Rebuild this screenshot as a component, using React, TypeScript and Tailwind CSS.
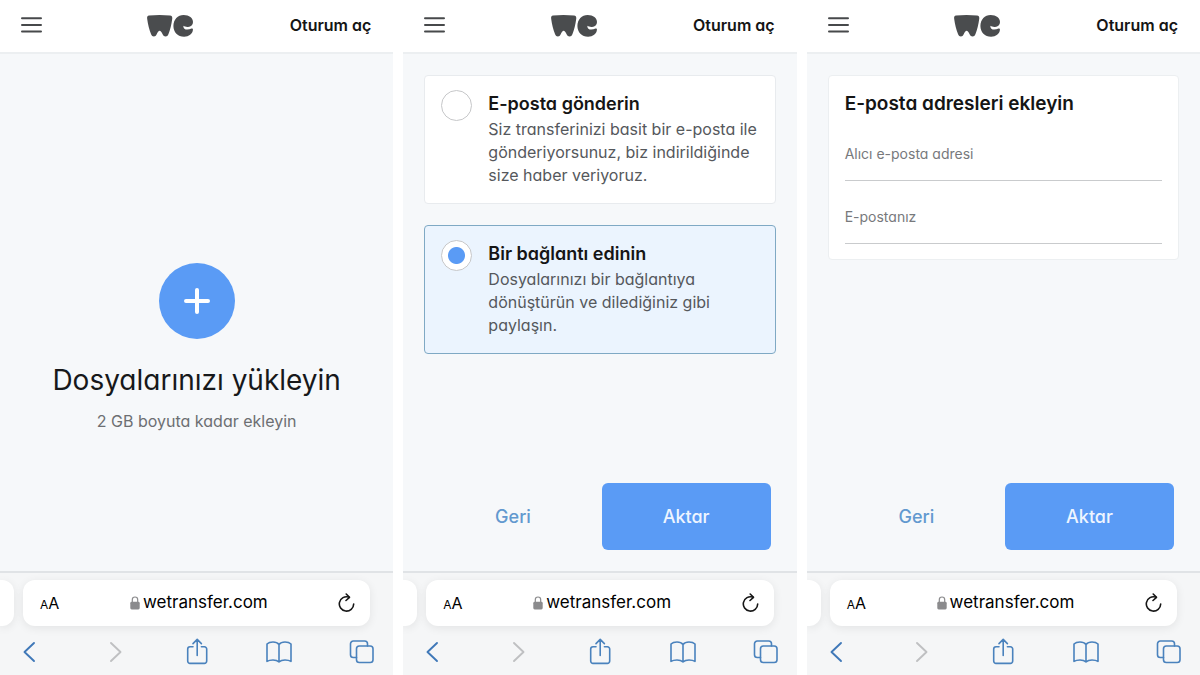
import React from 'react';

const MenuIcon = () => (
  <svg width="21" height="16" viewBox="0 0 21 16" fill="none" stroke="#47494b" strokeWidth="2" strokeLinecap="round" aria-hidden="true">
    <path d="M1 1.2h19M1 7.9h19M1 14.6h19" />
  </svg>
);

const Logo = () => (
  <svg width="46" height="24" viewBox="0 -2 46 24" fill="#4a4c4e" role="img" aria-label="WeTransfer">
    <path d="M2 .4Q12.500-.5 23 .4C25 .6 25.500 1.800 25.200 4C24.500 9.500 23.200 14.800 21.400 19.200C20.700 21 20 21.400 18.600 21.400C17.200 21.400 16.400 20.800 15.600 19.200C14.600 17.100 13.600 15.700 12.600 15.700C11.600 15.700 10.700 17.100 9.700 19.200C8.900 20.800 8.200 21.400 6.900 21.400C5.500 21.400 4.800 20.900 4.100 19.200C2.300 14.800.9 9.500.2 4C-.1 1.800.3.6 2 .4Z" />
    <path d="M36.600 0C42.300 0 46 3 46 6.900C46 9.800 44 11.700 41 11.900C38.900 12 37.500 11.500 36.400 10.800C36.200 13 37.700 14.600 40.200 14.600C41.800 14.600 43.100 14.200 44.500 13.600C45.600 13.100 46.100 13.800 45.900 15C45.400 18.900 42 21.700 37.100 21.700C30.900 21.700 26.400 17.400 26.400 11C26.400 4.600 30.800 0 36.600 0Z" />
  </svg>
);

const LockIcon = () => (
  <svg width="10" height="14" viewBox="0 0 10 14" fill="none" aria-hidden="true">
    <path d="M2.3 6V3.7a2.7 2.7 0 0 1 5.4 0V6" stroke="#8b8b8d" strokeWidth="1.2" />
    <rect x="0.3" y="5.8" width="9.4" height="7.6" rx="1.4" fill="#8b8b8d" />
  </svg>
);

const ReloadIcon = () => (
  <svg width="17" height="20" viewBox="0 0 17 20" fill="none" stroke="#161616" strokeWidth="1.6" strokeLinecap="round" strokeLinejoin="round" aria-hidden="true">
    <path d="M10.8 4.1a7.2 7.2 0 1 0 4.9 7" />
    <path d="M8.2 1l3.3 3.3-3.5 3.2" />
  </svg>
);

const toolbar = [
  { label: 'Önceki sayfa', color: 'text-[#3f78b8]', icon: <path d="M17 5 7.500 14l9.500 9" strokeWidth="1.9" /> },
  { label: 'Sonraki sayfa', color: 'text-[#bfc0c2]', icon: <path d="M11 5l9.500 9-9.500 9" strokeWidth="1.9" /> },
  {
    label: 'Paylaş',
    color: 'text-[#4a82bd]',
    icon: <path d="M10 8.800H7a2.300 2.300 0 0 0-2.300 2.300v12A2.300 2.300 0 0 0 7 25.400h14.400a2.300 2.300 0 0 0 2.300-2.300v-12a2.300 2.300 0 0 0-2.300-2.300H18.400M14.200 17.500V1.800M10 5.600l4.200-4.200 4.200 4.200" />,
  },
  {
    label: 'Yer işaretleri',
    color: 'text-[#4a82bd]',
    icon: <path d="M14 6.500C12.600 4.700 10.600 4 8 4C5.500 4 3.200 4.800 2 6v17.400C3.400 22.500 5.500 22 8 22c2.500 0 4.500.6 6 1.900c1.500-1.300 3.500-1.900 6-1.900c2.500 0 4.600.5 6 1.400V6C24.800 4.800 22.500 4 20 4c-2.600 0-4.600.7-6 2.500ZM14 6.500v17" />,
  },
  {
    label: 'Sekmeler',
    color: 'text-[#4a82bd]',
    icon: (
      <>
        <rect x="8.500" y="8" width="16.500" height="16.500" rx="2.800" />
        <path d="M8.500 19.500H5.300a2.800 2.800 0 0 1-2.800-2.800V5.800A2.800 2.800 0 0 1 5.300 3h11.400a2.800 2.800 0 0 1 2.800 2.800V8" />
      </>
    ),
  },
];

const Header = () => (
  <header className="flex h-[54px] items-center justify-between border-b-2 border-[#eceff1] bg-white pr-[22px] pb-[3px] pl-[21px]">
    <button type="button" aria-label="Menü" className="w-[30px]">
      <MenuIcon />
    </button>
    <Logo />
    <a href="#oturum" className="text-base font-semibold text-[#151515]">
      Oturum aç
    </a>
  </header>
);

const BrowserBar = () => (
  <footer className="overflow-hidden border-t-2 border-[#e0e3e6] bg-[#f5f6f7] [font-feature-settings:normal]">
    <div className="flex gap-[9px] pt-[7px] pr-[23px]">
      <div className="w-[14px] rounded-r-xl bg-white shadow-[0_2px_10px_rgba(0,0,0,0.08)]" />
      <div className="flex h-[46px] flex-1 items-center justify-between rounded-xl bg-white pr-[15px] pl-[17px] text-black shadow-[0_2px_10px_rgba(0,0,0,0.08)]">
        <button type="button" aria-label="Metin boyutu" className="text-base leading-5">
          <span className="text-xs">A</span>A
        </button>
        <button type="button" className="flex items-center gap-[3px] text-[17px]">
          <LockIcon />
          wetransfer.com
        </button>
        <button type="button" aria-label="Yenile">
          <ReloadIcon />
        </button>
      </div>
    </div>
    <nav className="flex h-[49px] items-center justify-between pt-[2px] pr-[17px] pl-[17px]">
      {toolbar.map((item) => (
        <button key={item.label} type="button" aria-label={item.label} className={item.color}>
          <svg width="28" height="28" viewBox="0 0 28 28" fill="none" stroke="currentColor" strokeWidth="1.6" strokeLinecap="round" strokeLinejoin="round">
            {item.icon}
          </svg>
        </button>
      ))}
    </nav>
  </footer>
);

const Phone = ({ children }: { children: React.ReactNode }) => (
  <section className="flex min-w-0 flex-col bg-[#f6f8fa]">
    <Header />
    <div className="flex flex-1 flex-col">{children}</div>
    <BrowserBar />
  </section>
);

const Actions = () => (
  <div className="mt-auto flex h-[67px] pr-[26px] pl-[21px]">
    <button type="button" className="flex-1 text-lg font-medium text-[#6299cf]">
      Geri
    </button>
    <button type="button" className="w-[169px] rounded-md bg-[#5a9bf5] text-lg font-medium text-[#eef5ff]">
      Aktar
    </button>
  </div>
);

const options = [
  {
    id: 'email',
    title: 'E-posta gönderin',
    lines: ['Siz transferinizi basit bir e-posta ile', 'gönderiyorsunuz, biz indirildiğinde', 'size haber veriyoruz.'],
  },
  {
    id: 'link',
    title: 'Bir bağlantı edinin',
    lines: ['Dosyalarınızı bir bağlantıya', 'dönüştürün ve dilediğiniz gibi', 'paylaşın.'],
  },
];

const fields = [
  { id: 'recipient', label: 'Alıcı e-posta adresi' },
  { id: 'sender', label: 'E-postanız' },
];

export default function App() {
  return (
    <main
      lang="tr"
      className="grid min-h-screen grid-cols-3 gap-[10px] bg-white font-['Inter',sans-serif] [font-feature-settings:'cv11']"
    >
      {/* Upload */}
      <Phone>
        <div className="flex flex-1 flex-col items-center justify-center pt-[70px] text-center">
          <button type="button" aria-label="Dosya ekle" className="flex size-[76px] items-center justify-center rounded-full bg-[#5a9bf5]">
            <svg width="26" height="26" viewBox="0 0 26 26" stroke="#fff" strokeWidth="4" strokeLinecap="round" aria-hidden="true">
              <path d="M13 2v22M2 13h22" />
            </svg>
          </button>
          <h1 className="mt-[21px] text-[28px] leading-10 text-[#17181a]">Dosyalarınızı yükleyin</h1>
          <p className="mt-[9px] text-base text-[#6d6f72]">2 GB boyuta kadar ekleyin</p>
        </div>
      </Phone>

      {/* Transfer type */}
      <Phone>
        <div className="flex flex-1 flex-col px-[21px] pt-[21px]">
          <div className="flex flex-col gap-[21px]">
            {options.map((option) => (
              <label
                key={option.id}
                className="flex items-start gap-4 rounded border border-[#e8ebee] bg-white px-4 pt-[14px] pb-4 has-checked:border-[#7fa9c4] has-checked:bg-[#ebf4fe]"
              >
                <input
                  type="radio"
                  name="type"
                  defaultChecked={option.id === 'link'}
                  className="size-[31px] shrink-0 appearance-none rounded-full border border-[#c6c7c9] bg-white checked:bg-[radial-gradient(circle,#5a9bf5_8px,#fff_9px)]"
                />
                <span>
                  <span className="block text-lg leading-7 font-semibold text-[#151515]">{option.title}</span>
                  <span className="block text-base leading-[23px] whitespace-nowrap text-[#55585c]">
                    {option.lines.map((line) => (
                      <span key={line} className="block">
                        {line}
                      </span>
                    ))}
                  </span>
                </span>
              </label>
            ))}
          </div>
        </div>
        <div className="pb-[21px]">
          <Actions />
        </div>
      </Phone>

      {/* Email addresses */}
      <Phone>
        <div className="flex flex-1 flex-col px-[21px] pt-[21px]">
          <form className="flex flex-col gap-[9px] rounded border border-[#eceff1] bg-white px-4 pt-[14px] pb-[15px]">
            <h2 className="text-[19px] leading-7 font-semibold text-[#151515]">E-posta adresleri ekleyin</h2>
            {fields.map((field) => (
              <div key={field.id} className="flex h-[54px] flex-col pt-[17px]">
                <label htmlFor={field.id} className="text-sm text-[#77797c]">
                  {field.label}
                </label>
                <input id={field.id} type="email" className="h-[17px] w-full border-b border-[#c9cbcd] text-sm outline-none" />
              </div>
            ))}
          </form>
        </div>
        <div className="pb-[21px]">
          <Actions />
        </div>
      </Phone>
    </main>
  );
}
